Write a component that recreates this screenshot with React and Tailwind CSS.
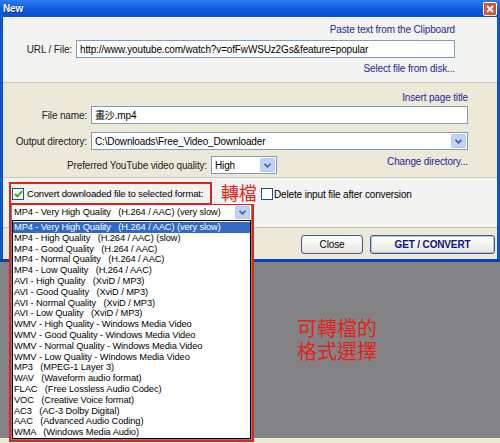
import React from 'react';

const formats = [
    'MP4 - Very High Quality   (H.264 / AAC) (very slow)',
    'MP4 - High Quality   (H.264 / AAC) (slow)',
    'MP4 - Good Quality   (H.264 / AAC)',
    'MP4 - Normal Quality   (H.264 / AAC)',
    'MP4 - Low Quality   (H.264 / AAC)',
    'AVI - High Quality   (XviD / MP3)',
    'AVI - Good Quality   (XviD / MP3)',
    'AVI - Normal Quality   (XviD / MP3)',
    'AVI - Low Quality   (XviD / MP3)',
    'WMV - High Quality - Windows Media Video',
    'WMV - Good Quality - Windows Media Video',
    'WMV - Normal Quality - Windows Media Video',
    'WMV - Low Quality - Windows Media Video',
    'MP3   (MPEG-1 Layer 3)',
    'WAV   (Waveform audio format)',
    'FLAC   (Free Lossless Audio Codec)',
    'VOC   (Creative Voice format)',
    'AC3   (AC-3 Dolby Digital)',
    'AAC   (Advanced Audio Coding)',
    'WMA   (Windows Media Audio)',
];

const DropArrow = ({ className = '' }) => (
    <div className={`w-[15px] h-full flex items-center justify-center bg-[#c1d3fb] border border-[#b3c8f5] rounded-[2px] ${className}`}>
        <svg width="7" height="5" viewBox="0 0 7 5">
            <path d="M0.5 0.8 L3.5 3.8 L6.5 0.8" stroke="#4d6185" strokeWidth="1.6" fill="none" />
        </svg>
    </div>
);

const Check = ({ checked }) => (
    <div className="w-[12px] h-[12px] bg-white border border-[#1c5180] flex items-center justify-center shrink-0">
        {checked && (
            <svg width="9" height="8" viewBox="0 0 9 8">
                <path d="M1 4 L3.5 6.5 L8 1.2" stroke="#21a121" strokeWidth="1.8" fill="none" />
            </svg>
        )}
    </div>
);

const App = () => {
    return (
        <div
            className="relative w-[500px] h-[443px] overflow-hidden bg-[#838285] text-[10px] tracking-[-0.15px] whitespace-nowrap text-black"
            style={{ fontFamily: '"Liberation Sans", Arial, "Noto Sans CJK TC", sans-serif' }}
        >
            {/* window */}
            <div className="flex flex-col">
                {/* title bar */}
                <div className="h-[17px] flex items-center justify-between px-[3px] bg-gradient-to-b from-[#2b7cf0] via-[#0a5ee0] to-[#0851d0]">
                    <span className="text-white font-bold text-[10px] [text-shadow:1px_1px_0_#0a2a80]">New</span>
                    <div className="w-[14px] h-[14px] rounded-[2px] border border-white bg-[#d6533a] flex items-center justify-center">
                        <svg width="8" height="8" viewBox="0 0 8 8">
                            <path d="M1 1 L7 7 M7 1 L1 7" stroke="white" strokeWidth="1.8" />
                        </svg>
                    </div>
                </div>

                <div className="border-x-[3px] border-[#0a54d6] flex flex-col">
                    {/* url section */}
                    <div className="h-[66px] bg-[#f3f3f1] border-b border-[#c9c7ba] flex flex-col pt-[7px] pr-[42px]">
                        <div className="flex justify-end text-[#27279a] leading-[12px]">Paste text from the Clipboard</div>
                        <div className="flex items-center mt-[4px]">
                            <span className="w-[73px] text-right pr-[4px] text-[#222]">URL / File:</span>
                            <div className="flex-1 h-[18px] bg-white border border-[#7f9db9] flex items-center px-[3px]">
                                http://www.youtube.com/watch?v=ofFwWSUz2Gs&amp;feature=popular
                            </div>
                        </div>
                        <div className="flex justify-end text-[#27279a] leading-[12px] mt-[5px]">Select file from disk...</div>
                    </div>

                    {/* file section */}
                    <div className="h-[95px] bg-[#ece9d8] border-b border-[#c9c7ba] flex flex-col pt-[9px] pr-[29px]">
                        <div className="flex justify-end text-[#27279a] leading-[12px]">Insert page title</div>
                        <div className="flex items-center mt-[2px]">
                            <span className="w-[88px] text-right pr-[4px] text-[#222]">File name:</span>
                            <div className="flex-1 h-[18px] bg-white border border-[#7f9db9] flex items-center px-[3px]">畫沙.mp4</div>
                        </div>
                        <div className="flex items-center mt-[8px]">
                            <span className="w-[88px] text-right pr-[4px] text-[#222]">Output directory:</span>
                            <div className="flex-1 h-[18px] bg-white border border-[#7f9db9] flex items-center pl-[3px] pr-[1px] py-[1px]">
                                <span className="flex-1">C:\Downloads\Free_Video_Downloader</span>
                                <DropArrow />
                            </div>
                        </div>
                        <div className="flex items-center mt-[6px]">
                            <span className="w-[208px] text-right pr-[4px] text-[#222]">Preferred YouTube video quality:</span>
                            <div className="w-[66px] h-[18px] bg-white border border-[#7f9db9] flex items-center pl-[3px] pr-[1px] py-[1px]">
                                <span className="flex-1">High</span>
                                <DropArrow />
                            </div>
                            <div className="flex-1 flex justify-end text-[#27279a] -mt-[7px]">Change directory...</div>
                        </div>
                    </div>

                    {/* convert section */}
                    <div className="h-[50px] bg-[#f3f3f1] border-b border-[#c9c7ba] flex flex-col pt-[5px] pl-[6px]">
                        <div className="flex items-center h-[22px]">
                            <div className="w-[203px] flex items-center gap-[3px] pl-[3px] text-[9.5px] tracking-[-0.15px]">
                                <Check checked />
                                <span>Convert downloaded file to selected format:</span>
                            </div>
                            <span className="w-[49px] pl-[9px] text-[18px] leading-[20px] text-[#e2231a]">轉檔</span>
                            <div className="flex items-center gap-[1px]">
                                <Check />
                                <span>Delete input file after conversion</span>
                            </div>
                        </div>
                    </div>

                    {/* buttons */}
                    <div className="h-[31px] bg-[#ece9d8] flex items-center justify-end gap-[7px] pr-[2px] pt-[2px]">
                        <button className="w-[62px] h-[19px] rounded-[3px] border border-[#3c5a8a] bg-gradient-to-b from-white to-[#e6e5dd] text-[10px]">Close</button>
                        <button className="w-[125px] h-[19px] rounded-[3px] border border-[#3c5a8a] bg-gradient-to-b from-white to-[#e6e5dd] text-[10px] font-bold text-[#10108a] shadow-[inset_0_0_0_1px_#a9c2f0]">GET / CONVERT</button>
                    </div>
                </div>
                <div className="h-[3px] bg-[#0a3fb8]" />
            </div>

            {/* annotation */}
            <div className="absolute left-[297px] top-[318px] text-[20px] leading-[23px] tracking-normal text-[#e2231a]">
                <div>可轉檔的</div>
                <div>格式選擇</div>
            </div>
            <div className="absolute left-0 right-0 bottom-0 h-[5px] bg-[#ece9d8]" />

            {/* red highlight boxes */}
            <div className="absolute left-[9px] top-[182px] w-[203px] h-[23px] border-2 border-[#e2231a]" />
            <div className="absolute left-[9px] top-[204px] w-[245px] h-[238px] border-2 border-[#e2231a] bg-[#838285]" />

            {/* format select with open list */}
            <div className="absolute left-[12px] top-[205px] w-[239px] flex flex-col text-[9.3px] tracking-[-0.1px]">
                <div className="h-[15px] bg-white flex items-center pl-[2px] pr-[1px] py-[1px]">
                    <span className="flex-1 whitespace-pre">{formats[0]}</span>
                    <DropArrow />
                </div>
                <div className="h-[219px] bg-white border border-black flex flex-col pt-[1px]">
                    {formats.map((f, i) => (
                        <div
                            key={f}
                            className={`h-[10.8px] leading-[10.8px] pl-[1px] whitespace-pre ${i === 0 ? 'bg-[#316ac5] text-white' : ''}`}
                        >
                            {f}
                        </div>
                    ))}
                </div>
            </div>
        </div>
    );
};

export default App;
